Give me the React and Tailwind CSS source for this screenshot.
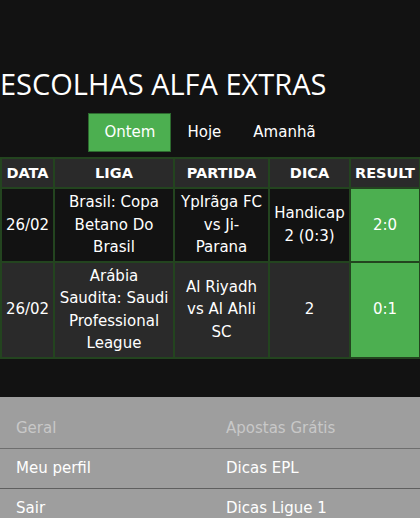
import React, { useState } from "react";

const matches = [
  {
    date: "26/02",
    league: "Brasil: Copa Betano Do Brasil",
    game: "YpIrãga FC vs Ji-Parana",
    tip: "Handicap 2 (0:3)",
    result: "2:0",
  },
  {
    date: "26/02",
    league: "Arábia Saudita: Saudi Professional League",
    game: "Al Riyadh vs Al Ahli SC",
    tip: "2",
    result: "0:1",
  },
];

const footerCols = [
  { title: "Geral", links: ["Meu perfil", "Sair"] },
  { title: "Apostas Grátis", links: ["Dicas EPL", "Dicas Ligue 1"] },
];

const App = () => {
  const [tab, setTab] = useState("Ontem");
  const tabs = ["Ontem", "Hoje", "Amanhã"];

  return (
    <div className="min-h-[518px] bg-[#121212] text-white font-['DejaVu_Sans',sans-serif] text-[15px]">
      <h1 className="pt-[65px] font-['Open_Sans',sans-serif] text-[29px] leading-[38px] font-normal">
        ESCOLHAS ALFA EXTRAS
      </h1>

      {/* Tabs */}
      <div className="mt-[10px] flex justify-center">
        {tabs.map((t) => (
          <button
            key={t}
            onClick={() => setTab(t)}
            className={
              t === tab
                ? "h-[39px] px-[15px] bg-[#4caf50] border border-[#2d6a2f] text-white"
                : "h-[39px] px-[15px] border border-transparent text-white"
            }
          >
            {t}
          </button>
        ))}
      </div>

      {/* Picks table */}
      <table className="mt-[5px] w-[419px] table-fixed border-collapse text-center">
        <colgroup>
          <col className="w-[53px]" />
          <col className="w-[120px]" />
          <col className="w-[95px]" />
          <col className="w-[81px]" />
          <col className="w-[70px]" />
        </colgroup>
        <thead>
          <tr className="bg-[#2a2a2a] h-[30px]">
            {["DATA", "LIGA", "PARTIDA", "DICA", "RESULT"].map((h) => (
              <th key={h} className="border-2 border-[#23441f] font-bold text-[14.5px] px-0 leading-[22px] whitespace-nowrap">
                {h}
              </th>
            ))}
          </tr>
        </thead>
        <tbody>
          {matches.map((m, i) => (
            <tr key={i} className={i % 2 === 0 ? "bg-[#121212]" : "bg-[#2a2a2a]"}>
              <td className="border-2 border-[#23441f] py-[2px] leading-[22.5px]">{m.date}</td>
              <td className="border-2 border-[#23441f] py-[2px] px-[4px] leading-[22.5px]">{m.league}</td>
              <td className="border-2 border-[#23441f] py-[2px] px-[4px] leading-[22.5px]">{m.game}</td>
              <td className="border-2 border-[#23441f] py-[2px] px-[2px] leading-[22.5px]">{m.tip}</td>
              <td className="border-2 border-[#23441f] py-[2px] leading-[22.5px] bg-[#4caf50]">{m.result}</td>
            </tr>
          ))}
        </tbody>
      </table>

      {/* Footer */}
      <footer className="mt-[38px] bg-[#9e9e9e] pt-[12px] grid grid-cols-2">
        {footerCols.map((col) => (
          <div key={col.title}>
            <div className="h-[40px] flex items-center px-4 text-[#c8c8c8] border-b border-[#6e6e6e]">
              {col.title}
            </div>
            {col.links.map((l) => (
              <div key={l} className="h-[40px] flex items-center px-4 border-b border-[#5f5f5f]">
                {l}
              </div>
            ))}
          </div>
        ))}
      </footer>
    </div>
  );
};

export default App;
